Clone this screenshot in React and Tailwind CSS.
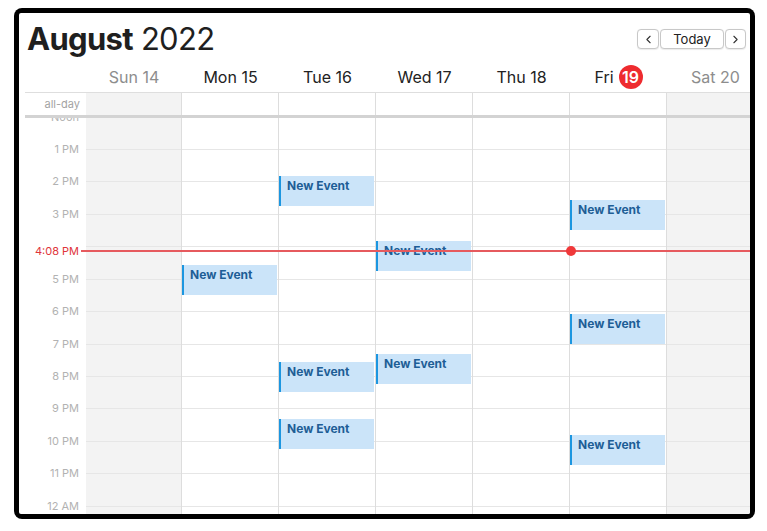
import { ChevronLeft, ChevronRight } from 'lucide-react';

// page y of the noon line is 116.5, one hour is 32.45px tall
const LABELS = ['Noon', '1 PM', '2 PM', '3 PM', '', '5 PM', '6 PM', '7 PM', '8 PM', '9 PM', '10 PM', '11 PM', '12 AM', ''];

const DAYS = [
  { label: 'Sun 14', weekend: true, first: true, events: [] },
  { label: 'Mon 15', events: [148.5] },
  { label: 'Tue 16', events: [59.5, 245.5, 302.5] },
  { label: 'Wed 17', events: [124.5, 237.5] },
  { label: 'Thu 18', events: [] },
  { label: 'Fri', today: '19', events: [83.5, 197.5, 318.5] },
  { label: 'Sat 20', weekend: true, events: [] },
];

const colClass = (d) =>
  `${d.first ? 'w-[96px]' : 'w-[97px]'} shrink-0 ${d.weekend ? 'bg-[#f3f3f3]' : 'bg-white'} border-r border-[#dddddd]`;

function DayHeader({ day }) {
  return (
    <div className={`${day.first ? 'w-[96px]' : 'w-[97px]'} shrink-0 flex items-center justify-center gap-[5px]`}>
      <span className={`text-[16px] ${day.weekend ? 'text-[#8d8d8d]' : 'text-[#222222]'}`}>{day.label}</span>
      {day.today && (
        <span className="w-[24px] h-[24px] rounded-full bg-[#ee2b2f] text-white text-[16px] font-semibold flex items-center justify-center">
          {day.today}
        </span>
      )}
    </div>
  );
}

function Event({ top }) {
  return (
    <div
      className="absolute left-0 right-[1px] h-[30px] bg-[#cbe4f9] border-l-2 border-[#1c96e0] pl-[6px] pt-[3px] text-[12px] leading-[14px] font-bold text-[#1e5e96]"
      style={{ top }}
    >
      New Event
    </div>
  );
}

export default function App() {
  return (
    <div className="w-[767px] h-[531px] bg-white pt-[8px] pl-[14px] font-['Inter','Noto_Sans',sans-serif] text-[#222222]">
      <div className="w-[741px] h-[511px] bg-black rounded-[8px] p-[5px]">
        <div className="w-full h-full bg-white rounded-[2px] overflow-hidden flex flex-col">
          {/* title + nav */}
          <div className="h-[49px] shrink-0 flex items-start justify-between">
            <h1 className="pl-[8px] pt-[10px] text-[31px] leading-[31px] text-[#1f1f1f] tracking-[-0.7px]">
              <span className="font-bold">August</span> <span className="font-normal">2022</span>
            </h1>
            <div className="mt-[16px] mr-[4px] flex gap-[1px]">
              <button className="w-[22px] h-[20px] border border-[#c8c8c8] rounded-[4px] bg-white flex items-center justify-center shadow-[0_0.5px_1px_rgba(0,0,0,0.08)]">
                <ChevronLeft size={13} strokeWidth={2} color="#333" />
              </button>
              <button className="w-[64px] h-[20px] border border-[#c8c8c8] rounded-[4px] bg-white text-[13px] leading-[18px] text-[#222] shadow-[0_0.5px_1px_rgba(0,0,0,0.08)]">
                Today
              </button>
              <button className="w-[21px] h-[20px] border border-[#c8c8c8] rounded-[4px] bg-white flex items-center justify-center shadow-[0_0.5px_1px_rgba(0,0,0,0.08)]">
                <ChevronRight size={13} strokeWidth={2} color="#333" />
              </button>
            </div>
          </div>

          {/* day headers */}
          <div className="ml-[6px] h-[31px] shrink-0 flex border-b border-[#dedede]">
            <div className="w-[61px] shrink-0" />
            {DAYS.map((d) => (
              <DayHeader key={d.label} day={d} />
            ))}
          </div>

          {/* all-day row */}
          <div className="ml-[6px] h-[25px] shrink-0 flex border-b-[3px] border-[#d3d3d3]">
            <div className="w-[61px] shrink-0 pr-[6px] flex items-center justify-end text-[11px] text-[#a3a3a3]">
              all-day
            </div>
            {DAYS.map((d) => (
              <div key={d.label} className={colClass(d)} />
            ))}
          </div>

          {/* hours */}
          <div className="ml-[6px] flex-1 min-h-0 relative overflow-hidden">
            <div className="-mt-[1.5px] flex">
              <div className="w-[61px] shrink-0">
                {LABELS.map((l, i) => (
                  <div key={i} className="h-[32.45px] relative">
                    {l && (
                      <span className="absolute right-[7px] -top-[7px] text-[11px] leading-[14px] text-[#b2b2b2]">{l}</span>
                    )}
                  </div>
                ))}
              </div>
              {DAYS.map((d) => (
                <div key={d.label} className={`${colClass(d)} relative`}>
                  {LABELS.map((_, i) => (
                    <div key={i} className="h-[32.45px] border-t border-[#e6e6e6]" />
                  ))}
                  {d.events.map((t) => (
                    <Event key={t} top={t} />
                  ))}
                </div>
              ))}
            </div>

            {/* current time */}
            <span className="absolute left-0 w-[54px] top-[126px] text-right text-[11px] leading-[14px] text-[#e0343a]">
              4:08 PM
            </span>
            <div className="absolute left-[56px] right-0 top-[132px] h-[2px] bg-[#e65a5e]" />
            <div className="absolute left-[541px] top-[128px] w-[10px] h-[10px] rounded-full bg-[#f0383a]" />
          </div>
        </div>
      </div>
    </div>
  );
}
